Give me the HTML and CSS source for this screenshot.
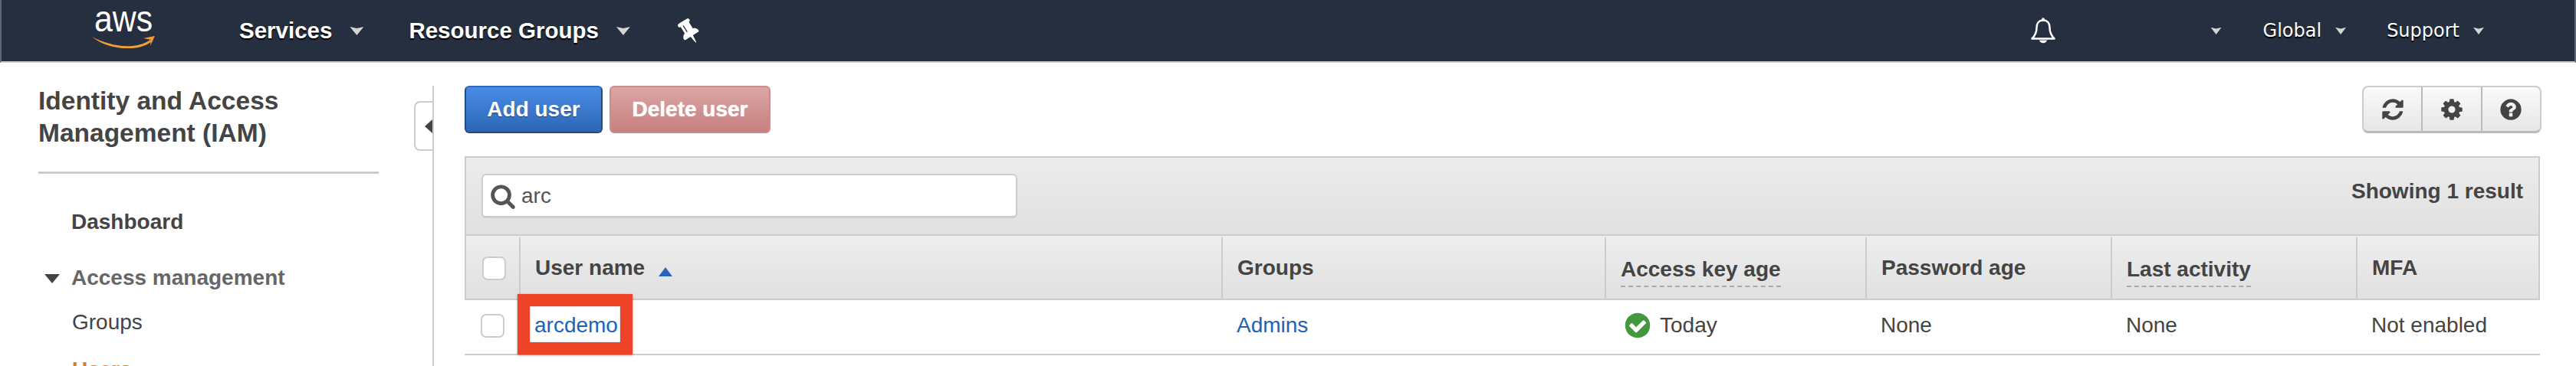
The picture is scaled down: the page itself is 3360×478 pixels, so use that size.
FILE: index.html
```html
<!DOCTYPE html>
<html lang="en">
<head>
<meta charset="utf-8">
<title>IAM Users</title>
<link rel="stylesheet" href="styles.css">
</head>
<body>
<header class="nav">
  <svg class="logo" viewBox="0 0 82 48" width="82" height="48" aria-label="aws">
    <text x="3" y="26" textLength="76" lengthAdjust="spacingAndGlyphs" class="logo-text">aws</text>
    <path d="M0 33 C20 44 55 52 76 37 L78 39 C60 54 20 50 0 33Z" class="smile"/>
    <path d="M67 35 L82 32 L76 45 L77 37Z" class="smile"/>
  </svg>
  <div class="nav-item nav-services">Services<span class="caret"></span></div>
  <div class="nav-item nav-groups">Resource Groups<span class="caret"></span></div>
  <svg class="pin" viewBox="0 0 1792 1792" width="35" height="35">
    <path transform="rotate(-32 896 896)" fill="#fff" d="M800 864v-448q0-14-9-23t-23-9-23 9-9 23v448q0 14 9 23t23 9 23-9 9-23zm672 352q0 26-19 45t-45 19h-429l-51 483q-2 12-10.500 20.500t-20.500 8.500h-1q-27 0-32-27l-76-485h-404q-26 0-45-19t-19-45q0-123 78.500-221.500t177.500-98.500v-512q-52 0-90-38t-38-90 38-90 90-38h640q52 0 90 38t38 90-38 90-90 38v512q99 0 177.500 98.500t78.500 221.500z"/>
  </svg>
  <div class="nav-spacer"></div>
  <svg class="bell" viewBox="0 0 32 34" width="32" height="34">
    <circle cx="16" cy="2.200" r="2" fill="#fff"/>
    <path class="bell-body" d="M16 3.500C10 3.500 7.500 8 7.500 13 7.500 20 5 24 1.500 27.500H30.500C27 24 24.500 20 24.500 13 24.500 8 22 3.500 16 3.500Z"/>
    <path d="M11 29.500C12 34.500 20 34.500 21 29.500Z" fill="#fff"/>
  </svg>
  <span class="caret small user-caret"></span>
  <div class="nav-sm nav-global">Global<span class="caret small"></span></div>
  <div class="nav-sm nav-support">Support<span class="caret small"></span></div>
</header>

<div class="layout">
  <aside class="side">
    <h1 class="side-title">Identity and Access Management (IAM)</h1>
    <hr class="side-rule">
    <a class="side-dash">Dashboard</a>
    <div class="side-group"><span class="tri"></span>Access management</div>
    <a class="side-link">Groups</a>
    <a class="side-link active">Users</a>
  </aside>
  <div class="divider">
    <div class="collapse"><span class="collapse-arrow"></span></div>
  </div>
  <main class="main">
    <div class="toolbar">
      <button class="btn primary">Add user</button>
      <button class="btn danger">Delete user</button>
      <div class="tool-spacer"></div>
      <div class="tools">
        <div class="tool">
          <svg viewBox="0 0 1792 1792" width="32" height="32"><path fill="#444" d="M1639 1056q0 5-1 7-64 268-268 434.500t-478 166.500q-146 0-282.500-55t-243.500-157l-129 129q-19 19-45 19t-45-19-19-45v-448q0-26 19-45t45-19h448q26 0 45 19t19 45-19 45l-137 137q71 66 161 102t187 36q134 0 250-65t186-179q11-17 53-117 8-23 30-23h192q13 0 22.500 9.500t9.500 22.500zm25-800v448q0 26-19 45t-45 19h-448q-26 0-45-19t-19-45 19-45l138-138q-148-137-349-137-134 0-250 65t-186 179q-11 17-53 117-8 23-30 23h-199q-13 0-22.500-9.500t-9.500-22.500v-7q65-268 270-434.500t480-166.500q146 0 284 55.500t245 156.500l130-129q19-19 45-19t45 19 19 45z"/></svg>
        </div>
        <div class="tool">
          <svg viewBox="0 0 1792 1792" width="32" height="32"><path fill="#444" d="M1152 896q0-106-75-181t-181-75-181 75-75 181 75 181 181 75 181-75 75-181zm512-109v222q0 12-8 23t-20 13l-185 28q-19 54-39 91 35 50 107 138 10 12 10 25t-9 23q-27 37-99 108t-94 71q-12 0-26-9l-138-108q-44 23-91 38-16 136-29 186-7 28-36 28h-222q-14 0-24.500-8.500t-11.500-21.500l-28-184q-49-16-90-37l-141 107q-10 9-25 9-14 0-25-11-126-114-165-168-7-10-7-23 0-12 8-23 15-21 51-66.500t54-70.500q-27-50-41-99l-183-27q-13-2-21-12.500t-8-23.500v-222q0-12 8-23t19-13l186-28q14-46 39-92-40-57-107-138-10-12-10-24 0-10 9-23 26-36 98.500-107.500t94.500-71.500q13 0 26 10l138 107q44-23 91-38 16-136 29-186 7-28 36-28h222q14 0 24.500 8.500t11.500 21.500l28 184q49 16 90 37l142-107q9-9 24-9 13 0 25 10 129 119 165 170 7 8 7 22 0 12-8 23-15 21-51 66.500t-54 70.500q26 50 41 98l183 28q13 2 21 12.500t8 23.500z"/></svg>
        </div>
        <div class="tool">
          <svg viewBox="0 0 1792 1792" width="32" height="32"><path fill="#444" d="M1024 1376v-192q0-14-9-23t-23-9h-192q-14 0-23 9t-9 23v192q0 14 9 23t23 9h192q14 0 23-9t9-23zm256-672q0-88-55.500-163t-138.500-116-170-41q-243 0-371 213-15 24 8 42l132 100q7 6 19 6 16 0 25-12 53-68 86-92 34-24 86-24 48 0 85.500 26t37.500 59q0 38-20 61t-68 45q-63 28-115.500 86.500t-52.500 125.500v36q0 14 9 23t23 9h192q14 0 23-9t9-23q0-19 21.500-49.500t54.500-49.500q32-18 49-28.500t46-35 44.500-48 28-60.500 12.500-81zm384 192q0 209-103 385.500t-279.500 279.500-385.500 103-385.500-103-279.500-279.500-103-385.500 103-385.500 279.500-279.500 385.500-103 385.500 103 279.500 279.500 103 385.500z"/></svg>
        </div>
      </div>
    </div>
    <section class="panel">
      <div class="filter">
        <div class="search">
          <svg viewBox="0 0 1792 1792" width="34" height="34"><path fill="#555" d="M1216 832q0-185-131.500-316.500t-316.500-131.500-316.500 131.500-131.500 316.500 131.500 316.500 316.500 131.500 316.500-131.500 131.500-316.500zm512 832q0 52-38 90t-90 38q-54 0-90-38l-343-342q-179 124-399 124-143 0-273.500-55.500t-225-150-150-225-55.500-273.500 55.500-273.500 150-225 225-150 273.500-55.500 273.500 55.500 225 150 150 225 55.500 273.500q0 220-124 399l343 343q37 37 37 90z"/></svg>
          <span>arc</span>
        </div>
        <div class="count">Showing 1 result</div>
      </div>
      <div class="grid head">
        <div class="cell cb-cell"><span class="check"></span></div>
        <div class="cell">User name<span class="sort"></span></div>
        <div class="cell">Groups</div>
        <div class="cell"><span class="dotted">Access key age</span></div>
        <div class="cell">Password age</div>
        <div class="cell"><span class="dotted">Last activity</span></div>
        <div class="cell">MFA</div>
      </div>
      <div class="grid row">
        <div class="cell cb-cell"><span class="check"></span></div>
        <div class="cell"><a class="link">arcdemo</a></div>
        <div class="cell"><a class="link">Admins</a></div>
        <div class="cell today">
          <svg viewBox="0 0 1792 1792" width="38" height="38"><path fill="#43983f" d="M1412 734q0-28-18-46l-91-90q-19-19-45-19t-45 19l-408 407-226-226q-19-19-45-19t-45 19l-91 90q-18 18-18 46 0 27 18 45l362 362q19 19 45 19 27 0 46-19l543-543q18-18 18-45zm252 162q0 209-103 385.500t-279.500 279.500-385.500 103-385.500-103-279.500-279.500-103-385.500 103-385.500 279.500-279.500 385.500-103 385.500 103 279.500 279.500 103 385.500z"/></svg>
          Today
        </div>
        <div class="cell">None</div>
        <div class="cell">None</div>
        <div class="cell">Not enabled</div>
      </div>
      <div class="highlight"></div>
    </section>
  </main>
</div>
</body>
</html>
```
FILE: styles.css
```css
* { box-sizing: border-box; }
html, body { margin: 0; height: 478px; overflow: hidden; background: #fff; }
body { font-family: "Liberation Sans", Arial, sans-serif; color: #444; font-size: 28px; }

.nav {
  height: 82px;
  background: #252f3f;
  border-bottom: 2px solid #ccc;
  border-left: 2px solid #5c6570;
  border-right: 2px solid #5c6570;
  display: flex;
  align-items: center;
  color: #fff;
}
.logo { margin-left: 118px; margin-bottom: 2px; flex: none; }
.logo-text { font: 48px "Liberation Sans", sans-serif; fill: #fff; }
.smile { fill: #f19e35; }
.nav-item { font-weight: bold; font-size: 29.5px; text-shadow: 0 2px 1px #000; display: flex; align-items: center; }
.nav-services { margin-left: 110px; }
.nav-groups { margin-left: 59px; }
.caret {
  display: inline-block;
  flex: none;
  width: 18px; height: 12px;
  margin-left: 23px;
  background: #d4d4d4;
  clip-path: polygon(0 8%, 50% 26%, 100% 8%, 50% 100%);
}
.caret.small { width: 14px; height: 10px; margin-left: 18px; }
.pin { margin-left: 59px; flex: none; }
.nav-spacer { flex: 1; }
.bell { flex: none; margin-right: 203px; }
.bell-body { fill: none; stroke: #fff; stroke-width: 2.5; stroke-linejoin: round; }
.caret.user-caret { margin-left: 0; margin-right: 54px; }
.nav-sm { font-family: "DejaVu Sans", sans-serif; font-size: 24px; text-shadow: 0 2px 1px #000; display: flex; align-items: center; }
.nav-global { margin-right: 53px; }
.nav-support { margin-right: 118px; }

.layout { display: flex; height: 396px; }
.side { width: 564px; padding: 29px 0 0 50px; flex: none; }
.side-title { margin: 0; width: 444px; font-size: 33.5px; line-height: 42px; font-weight: bold; color: #444; }
.side-rule { margin: 29px 0 0; width: 444px; height: 3px; border: 0; background: #ccc; }
.side-dash { display: block; margin: 46px 0 0 43px; font-weight: bold; line-height: 34px; }
.side-group { margin-top: 39px; font-weight: bold; color: #666; line-height: 34px; display: flex; align-items: center; }
.tri { width: 0; height: 0; margin: 2px 15px 0 8px; border-left: 10px solid transparent; border-right: 10px solid transparent; border-top: 12px solid #444; }
.side-link { display: block; margin: 24px 0 0 44px; line-height: 34px; }
.side-link.active { color: #de7b22; font-weight: bold; margin-top: 28px; }

.divider { width: 2px; flex: none; background: #ccc; margin-top: 30px; position: relative; }
.collapse {
  position: absolute; right: 2px; top: 20px; width: 24px; height: 65px;
  background: #fff; border: 2px solid #ccc; border-right: 0; border-radius: 8px 0 0 8px;
  display: flex; align-items: center; justify-content: flex-end;
}
.collapse-arrow { width: 0; height: 0; border-top: 9px solid transparent; border-bottom: 9px solid transparent; border-right: 10px solid #444; }

.main { flex: 1; padding: 30px 47px 0 40px; min-width: 0; }
.toolbar { display: flex; height: 62px; gap: 9px; }
.btn {
  font: bold 28px "Liberation Sans", Arial, sans-serif; color: #fff; border-radius: 6px;
  height: 62px; padding: 0;
}
.btn.primary { width: 180px; background: linear-gradient(#4a8ce6, #2c66b4); border: 2px solid #1e4b8a; border-top-color: #2e6bc0; text-shadow: 0 1px 1px rgba(0,0,0,.4); }
.btn.danger { width: 210px; background: linear-gradient(#dba6a6, #c87f7f); border: 2px solid #cc8c8c; text-shadow: 0 0 1px #fff; }
.tool-spacer { flex: 1; }
.tools { display: flex; width: 234px; height: 62px; margin-right: -2px; border: 2px solid #ccc; border-bottom: 3px solid #bbb; border-radius: 8px; background: linear-gradient(#fafafa, #e6e6e6); overflow: hidden; }
.tool { flex: 1; display: flex; align-items: center; justify-content: center; border-left: 2px solid #bbb; }
.tool:first-child { border-left: 0; }

.panel { position: relative; margin-top: 30px; }
.filter {
  height: 102px; display: flex; justify-content: space-between;
  background: linear-gradient(#ececec, #e0e0e0);
  border: 2px solid #ccc; border-bottom: 0;
  padding: 21px 20px 0;
}
.search {
  width: 699px; height: 58px; background: #fff; border: 2px solid #ccc; border-bottom-width: 3px; border-radius: 6px;
  display: flex; align-items: center; gap: 7px; padding-left: 9px; color: #555;
}
.count { font-weight: bold; line-height: 34px; margin-top: 6px; }
.grid { display: grid; }
.head { grid-template-columns: 69px 916px 500px 340px 320px 320px 238px; height: 86px; padding-top: 2px; background: linear-gradient(#eee, #e0e0e0); border: 2px solid #ccc; font-weight: bold; }
.head .cell { border-left: 2px solid #ccc; padding-left: 19px; }
.head .cell:first-child { border-left: 0; padding-left: 21px; }
.cell { display: flex; align-items: center; padding-left: 20px; white-space: nowrap; min-width: 0; }
.cb-cell { padding-left: 21px; }
.check { width: 31px; height: 31px; background: #fff; border: 2px solid #ccc; border-radius: 7px; flex: none; }
.sort { width: 0; height: 0; margin-left: 18px; margin-top: 10px; border-left: 9px solid transparent; border-right: 9px solid transparent; border-bottom: 12px solid #2a66b8; }
.dotted { border-bottom: 2px dashed #aaa; padding-bottom: 5px; margin-top: 10px; }
.row { grid-template-columns: 71px 916px 500px 340px 320px 320px 240px; height: 72px; padding-bottom: 4px; border-bottom: 2px solid #ccc; }
.link { color: #1f62b8; }
.cell.today { gap: 10px; padding-left: 24px; }
.highlight {
  position: absolute; left: 69px; top: 180px; width: 150px; height: 79px;
  border: 16px solid #ee4326; box-shadow: 0 1px 3px rgba(0,0,0,.35), inset 0 0 2px rgba(0,0,0,.3);
}
```
